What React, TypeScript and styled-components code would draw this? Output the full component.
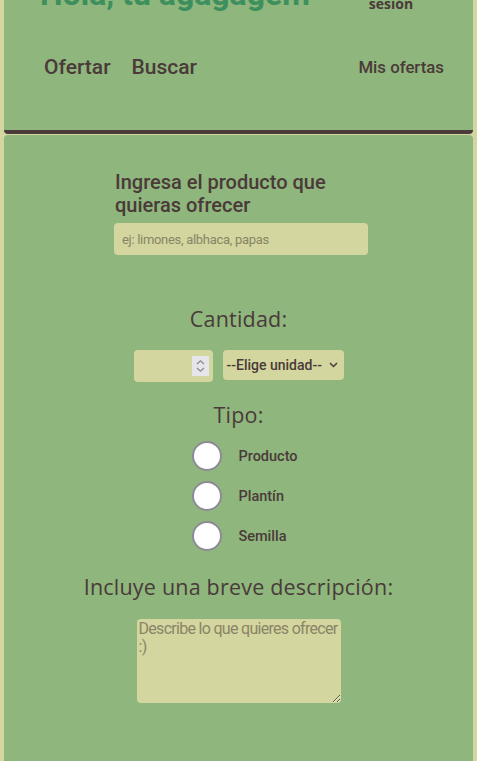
import React from "react";
import styled, { createGlobalStyle } from "styled-components";

const Global = createGlobalStyle`
  html, body { margin: 0; padding: 0; }
  body {
    background: #d3d69e;
    font-family: Roboto, "Noto Sans", sans-serif;
    color: #4a3a3a;
    overflow: hidden;
  }
`;

const Page = styled.div`
  padding: 0 4px;
  height: 761px;
  overflow: hidden;
`;

const Header = styled.header`
  background: #8fb67c;
  border-bottom: 4px solid #4a3a3a;
  border-radius: 0 0 4px 4px;
  height: 130px;
  overflow: hidden;
`;

const TopRow = styled.div`
  display: flex;
  justify-content: space-between;
  align-items: flex-end;
  margin-top: -25px;
  padding: 0 52px 0 36px;
  height: 38px;
`;

const Title = styled.h1`
  margin: 0;
  font-family: Roboto, sans-serif;
  font-weight: 700;
  font-size: 32px;
  line-height: 38px;
  color: #3e8f5e;
  white-space: nowrap;
`;

const Logout = styled.div`
  font-family: "Open Sans", sans-serif;
  font-weight: 700;
  font-size: 14px;
  line-height: 16px;
  text-align: center;
  width: 60px;
  margin-bottom: 1px;
`;

const Nav = styled.nav`
  display: flex;
  align-items: center;
  padding: 42px 29px 0 40px;
`;

const NavLink = styled.a<{ $size?: number; $last?: boolean }>`
  font-weight: 500;
  font-size: ${(p) => p.$size ?? 21}px;
  color: #4a3a3a;
  text-decoration: none;
  margin-right: ${(p) => (p.$last ? 0 : 21)}px;
`;

const Spacer = styled.div`
  flex: 1;
`;

const Main = styled.main`
  background: #8fb67c;
  border-radius: 4px 4px 0 0;
  margin-top: 1px;
  height: 700px;
  display: flex;
  flex-direction: column;
  align-items: center;
  padding-top: 36px;
`;

const ProductBlock = styled.div`
  width: 254px;
  margin-left: 5px;
  display: flex;
  flex-direction: column;
`;

const ProductLabel = styled.label`
  font-weight: 500;
  font-size: 20px;
  line-height: 23px;
  margin-bottom: 6px;
  padding-left: 1px;
`;

const TextInput = styled.input`
  box-sizing: border-box;
  width: 254px;
  height: 32px;
  border: none;
  border-radius: 4px;
  background: #d3d69e;
  padding: 0 8px;
  font-family: Roboto, sans-serif;
  font-size: 13px;
  letter-spacing: -0.3px;
  color: #4a3a3a;
  &::placeholder { color: #8a8468; }
  outline: none;
`;

const SectionTitle = styled.h2<{ $mt: number }>`
  margin: ${(p) => p.$mt}px 0 0;
  font-family: "Open Sans", Lato, sans-serif;
  font-weight: 400;
  font-size: 21.5px;
  letter-spacing: 0.2px;
  line-height: 24px;
  color: #4a3a3a;
  text-align: center;
`;

const QtyRow = styled.div`
  display: flex;
  gap: 10px;
  margin-top: 19px;
  align-items: flex-start;
`;

const NumberBox = styled.div`
  box-sizing: border-box;
  width: 79px;
  height: 32px;
  background: #d3d69e;
  border-radius: 4px;
  display: flex;
  justify-content: flex-end;
  align-items: center;
  padding-right: 4px;
`;

const Spin = styled.div`
  width: 17px;
  height: 20px;
  background: #e6e6ea;
  display: flex;
  align-items: center;
  justify-content: center;
`;

const SelectBox = styled.div`
  box-sizing: border-box;
  width: 121px;
  height: 30px;
  background: #d3d69e;
  border-radius: 4px;
  display: flex;
  align-items: center;
  justify-content: space-between;
  padding: 0 6px 0 4px;
  font-weight: 500;
  font-size: 14px;
`;

const Radios = styled.div`
  display: flex;
  flex-direction: column;
  gap: 10px;
  margin-top: 14px;
  margin-left: 13px;
`;

const RadioRow = styled.label`
  display: flex;
  align-items: center;
  gap: 16px;
  font-weight: 500;
  font-size: 14.5px;
`;

const Circle = styled.span`
  box-sizing: border-box;
  width: 30px;
  height: 30px;
  border-radius: 50%;
  background: #fff;
  border: 2px solid #8e8a99;
`;

const TextArea = styled.textarea`
  box-sizing: border-box;
  width: 204px;
  height: 84px;
  margin-top: 20px;
  border: none;
  border-radius: 4px;
  background: #d3d69e;
  padding: 1px 2px;
  font-family: Roboto, sans-serif;
  font-size: 16px;
  letter-spacing: -0.7px;
  line-height: 18px;
  color: #4a3a3a;
  resize: both;
  outline: none;
  &::placeholder { color: #8a8468; }
`;

export default function App() {
  return (
    <Page>
      <Global />
      <Header>
        <TopRow>
          <Title>Hola, tu agagagem</Title>
          <Logout>Cerrar sesión</Logout>
        </TopRow>
        <Nav>
          <NavLink href="#">Ofertar</NavLink>
          <NavLink href="#">Buscar</NavLink>
          <Spacer />
          <NavLink href="#" $size={16.8} $last>Mis ofertas</NavLink>
        </Nav>
      </Header>
      <Main>
        <ProductBlock>
          <ProductLabel>Ingresa el producto que quieras ofrecer</ProductLabel>
          <TextInput placeholder="ej: limones, albhaca, papas" />
        </ProductBlock>
        <SectionTitle $mt={52}>Cantidad:</SectionTitle>
        <QtyRow>
          <NumberBox>
            <Spin>
              <svg width="9" height="14" viewBox="0 0 9 14" fill="none" stroke="#8a8a90" strokeWidth="1.3">
                <path d="M1 5 L4.5 1.8 L8 5" />
                <path d="M1 9 L4.5 12.2 L8 9" />
              </svg>
            </Spin>
          </NumberBox>
          <SelectBox>
            <span>--Elige unidad--</span>
            <svg width="9" height="6" viewBox="0 0 9 6" fill="none" stroke="#4a3a3a" strokeWidth="1.5">
              <path d="M1 1 L4.5 4.5 L8 1" />
            </svg>
          </SelectBox>
        </QtyRow>
        <SectionTitle $mt={21}>Tipo:</SectionTitle>
        <Radios>
          <RadioRow><Circle />Producto</RadioRow>
          <RadioRow><Circle />Plantín</RadioRow>
          <RadioRow><Circle />Semilla</RadioRow>
        </Radios>
        <SectionTitle $mt={24}>Incluye una breve descripción:</SectionTitle>
        <TextArea placeholder="Describe lo que quieres ofrecer :)" />
      </Main>
    </Page>
  );
}
